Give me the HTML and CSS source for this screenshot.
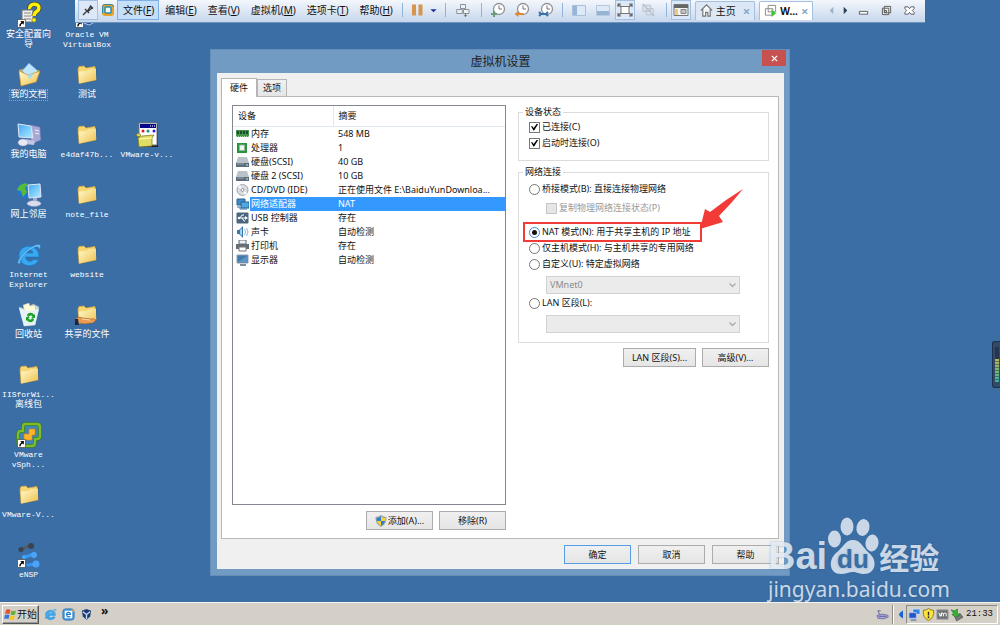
FILE: index.html
```html
<!DOCTYPE html>
<html lang="zh-CN">
  <head>
    <meta charset="UTF-8" />
    <meta name="viewport" content="width=device-width, initial-scale=1.0" />
    <title>虚拟机设置</title>
    <link rel="stylesheet" href="styles.css">
  </head>
  <body>
    <!-- Shared icons -->
    <svg class="sprite" aria-hidden="true">
      <linearGradient id="gold" x1="0" y1="0" x2="1" y2="1"><stop offset="0" stop-color="#fffbd0" /><stop offset="1" stop-color="#efc04c" /></linearGradient>
      <linearGradient id="screen" x1="0" y1="0" x2="1" y2="1"><stop offset="0" stop-color="#3da8f4" /><stop offset="1" stop-color="#b4ecff" /></linearGradient>
      <symbol id="folder" viewBox="0 0 26 26">
        <path d="M5 22 22 18.500 22.500 6 21 5 14 6 12 4 6 4.500 4 7z" fill="#2c5178" opacity=".6" />
        <path d="M4 7 5 4.500 10 4 12 6 21 4.500 22 18 5 21.500z" fill="#f5d673" stroke="#d6a63c" stroke-width=".7" />
        <path d="M4.500 9.500 13 9 14 7.500 22 6.500 22 17.500 5.500 21.500z" fill="url(#gold)" />
      </symbol>
      <symbol id="shortcut" viewBox="0 0 9 9">
        <path d="M.5.500h8v8h-8z" fill="#fff" stroke="#333" stroke-width=".6" />
        <path d="M2.300 7.500Q2 4.600 4.300 3.800L3.300 2.200 7 2 6.600 5.700 5.500 4.600Q3.600 5.300 3.700 7.300z" fill="#000" />
      </symbol>
      <symbol id="ie" viewBox="0 0 26 26">
        <path d="M23 15H9.500c.3 5 6 5.500 8 2.500l5 .5C19 26.500 3 25.500 3 13.500 3 1 23.500 1 23 15zM9.500 11h7.500c-.5-4.500-7-4.500-7.500 0z" fill="#38a8ef" stroke="#1679c9" stroke-width=".6" />
        <path d="M7 18C2 25-1 21 6 13 12 6 22 .5 24 3c1 1 0 3-1 4.500 0-3-1-3.500-5-2C11 9 3.500 17 4 20c.2 1 1.500.2 3-2z" fill="#6fc0f7" stroke="#2487d0" stroke-width=".4" />
      </symbol>
      <symbol id="disk" viewBox="0 0 13 12">
        <path d="M2 1h9l2 6H0z" fill="#b9c2c9" /><path d="M0 7h13v4H0z" fill="#5c6c7a" /><path d="M1 8h7" stroke="#93a3b0" /><path d="M10 9h2" stroke="#b9f4ff" />
      </symbol>
      <symbol id="clock" viewBox="0 0 16 16">
        <circle cx="9" cy="7" r="5.500" fill="#fff" stroke="#929292" stroke-width="1.300" /><path d="M9 3.500V7h3" fill="none" stroke="#777" />
      </symbol>
    </svg>

    <main class="desktop">
      <div class="icons">
        <a href="#" class="shortcut c1 r1"><svg viewBox="0 0 26 26"><path d="M6 8h11v12H6z" fill="#eee" stroke="#777" /><path d="M8 11h7M8 14h7M8 17h7" stroke="#888" /><path d="M13.500 7C13 1 23 .5 23 6c0 4-5 3-5 8" fill="none" stroke="#444" stroke-width="5" /><path d="M13.500 7C13 1 23 .5 23 6c0 4-5 3-5 8" fill="none" stroke="#fff200" stroke-width="3.500" /><circle cx="18" cy="18" r="2.200" fill="#fff200" stroke="#555" stroke-width=".6" /><use href="#shortcut" x="1" y="17" width="9" height="9" /></svg><span class="zh">安全配置向导</span></a>
        <a href="#" class="shortcut c1 r2 focused"><svg viewBox="0 0 26 26"><path d="M3 8 10 6 13 8 23 8 21 19 5 24z" fill="#dfaa40" /><path d="M13 1 22 9 14 17 6 9z" fill="#bce5ff" stroke="#5ba5dd" stroke-width=".7" /><path d="M3 9 12 13 24 9 20 20 5 24z" fill="url(#gold)" stroke="#c99532" stroke-width=".7" /><path d="m11 13 3 4 4-5z" fill="#a1daf9" /></svg><span class="zh">我的文档</span></a>
        <a href="#" class="shortcut c1 r3"><svg viewBox="0 0 26 26"><path d="M15 3 24 5 25 18 18 21 15 18z" fill="#a6a8d5" stroke="#6b6da9" stroke-width=".6" /><path d="m19 8 4 1m-4 2 4 1" stroke="#ecefff" /><path d="M2 2 15 4 17 16 3 15z" fill="url(#screen)" stroke="#dfe6f5" /><path d="m10 17 9 2-1 4-9-1z" fill="#c2c6e3" /><ellipse cx="7" cy="20.500" rx="5" ry="3.500" fill="#e6e8f3" stroke="#999dbf" stroke-width=".5" /></svg><span class="zh">我的电脑</span></a>
        <a href="#" class="shortcut c1 r4"><svg viewBox="0 0 26 26"><circle cx="8.500" cy="8.500" r="7.500" fill="#2475d3" /><path d="M3 4Q8 0 12 2L9 6 11 10 7 15 5 9 1 8z" fill="#55bb3a" /><path d="M12 3 24 2 25 15 13 16z" fill="url(#screen)" stroke="#e1e6f5" /><path d="M17 16h4v4h-4z" fill="#a6abd1" /><ellipse cx="18" cy="21.500" rx="7" ry="3" fill="#d9dced" stroke="#8f94bd" stroke-width=".5" /></svg><span class="zh">网上邻居</span></a>
        <a href="#" class="shortcut c1 r5"><svg viewBox="0 0 26 26"><use href="#ie" /></svg><span>Internet Explorer</span></a>
        <a href="#" class="shortcut c1 r6"><svg viewBox="0 0 26 26"><path d="M3 5 9 7 17 2 23 5 19 23 8 24z" fill="#c8dce7" stroke="#8eb4ca" stroke-width=".6" /><path d="m7 3 6-2 1 3 5-1 1 6-11 2z" fill="#fffbd4" stroke="#b7b594" stroke-width=".5" /><path d="M3 6q9 5 20 1l-4 16-11 1z" fill="#e8f2f5" /><path d="M11 14c0-4 6-4 7-1l1-1v4h-4l1.500-1c-.5-2-3-2-3.500 0zM18 17c0 4-6 4-7 1l-1 1v-4h4l-1.500 1c.5 2 3 2 3.500 0z" fill="#20a229" /></svg><span class="zh">回收站</span></a>
        <a href="#" class="shortcut c1 r7"><svg viewBox="0 0 26 26"><use href="#folder" /></svg><span>IISforWi...<br><b class="zh">离线包</b></span></a>
        <a href="#" class="shortcut c1 r8"><svg viewBox="0 0 26 26"><path d="M9 2h12q3 0 3 3v9q0 3-3 3h-2v4q0 3-3 3H5q-3 0-3-3V12q0-3 3-3h2V5q0-3 2-3z" fill="#3f86b4" stroke="#356f1c" stroke-width="3.500" /><path d="M9 2h12q3 0 3 3v9q0 3-3 3h-2v4q0 3-3 3H5q-3 0-3-3V12q0-3 3-3h2V5q0-3 2-3z" fill="none" stroke="#7cbd2a" stroke-width="2.500" /><path d="M13 7h6v6h-3v5H8v-6h5z" fill="#ffb729" stroke="#d87c06" stroke-width=".6" /><use href="#shortcut" x="1" y="17" width="9" height="9" /></svg><span>VMware vSph...</span></a>
        <a href="#" class="shortcut c1 r9"><svg viewBox="0 0 26 26"><use href="#folder" /></svg><span>VMware-V...</span></a>
        <a href="#" class="shortcut c1 r10"><svg viewBox="0 0 26 26"><g stroke-linecap="round"><path d="m6 7 9-4" stroke="#555b65" stroke-width="3" /><path d="m9 15 9-3M12 23l8-1" stroke="#3897f0" stroke-width="3" /></g><g fill="#3d434d"><circle cx="5" cy="7.500" r="2.500" /><circle cx="15" cy="4" r="3" /></g><g fill="#4ba4fa"><circle cx="8" cy="15" r="2" /><circle cx="18" cy="13" r="3" /><circle cx="20" cy="22" r="3.500" /></g><use href="#shortcut" x="1" y="17" width="9" height="9" /></svg><span>eNSP</span></a>

        <a href="#" class="shortcut c2 r1"><svg viewBox="0 0 26 26"><path d="m5 9 8-5 10 4v11l-8 4-10-4z" fill="#224a92" stroke="#b6ccec" /><use href="#shortcut" x="1" y="17" width="9" height="9" /></svg><span>Oracle VM VirtualBox</span></a>
        <a href="#" class="shortcut c2 r2"><svg viewBox="0 0 26 26"><use href="#folder" /></svg><span class="zh">测试</span></a>
        <a href="#" class="shortcut c2 r3"><svg viewBox="0 0 26 26"><use href="#folder" /></svg><span>e4daf47b...</span></a>
        <a href="#" class="shortcut c2 r4"><svg viewBox="0 0 26 26"><use href="#folder" /></svg><span>note_file</span></a>
        <a href="#" class="shortcut c2 r5"><svg viewBox="0 0 26 26"><use href="#folder" /></svg><span>website</span></a>
        <a href="#" class="shortcut c2 r6"><svg viewBox="0 0 26 26"><use href="#folder" /><path d="M1 17q4-3 8-1l8 1q3-1 5 1l-3 3-9 1-4-1-5 1z" fill="#e99c52" stroke="#854f28" stroke-width=".5" /><path d="M1 17h3l1 6H1z" fill="#17284a" /><path d="m8 17 8 1" stroke="#ffd3a0" /></svg><span class="zh">共享的文件</span></a>
        <a href="#" class="shortcut c3 r3"><svg viewBox="0 0 26 26"><path d="M6 2h18v23H6z" fill="#222" /><path d="M5 1h18v22H5z" fill="#fff" stroke="#777" /><path d="M6 2h16v4H6z" fill="#08088a" /><path d="M16 4h1m1 0h1m1 0h1" stroke="#fff" /><circle cx="9" cy="9" r="1.500" fill="#dc2020" /><circle cx="14" cy="9" r="1.500" fill="#128b8b" /><circle cx="20" cy="9" r="1.500" fill="#2222d7" /><path d="m2 13 2-2 3 2-2 2zM4 16l4-2 12-1-2 3v8L5 25z" fill="#dfdd65" stroke="#777513" stroke-width=".7" /><path d="m5 17 13-1" stroke="#ffffb3" /></svg><span>VMware-v...</span></a>
      </div>

      <!-- Full screen toolbar -->
      <header class="toolbar">
        <button class="tool pressed pin" aria-label="固定"><svg viewBox="0 0 14 14"><path d="M2 12 5.500 8.500M4 6l4 4M7 7l2.500-3.500L11 5 7.500 8zM9 2.500l3 3" fill="#aaa" stroke="#333" stroke-width="1.200" /></svg></button>
        <svg class="logo" viewBox="0 0 14 14"><path d="M4 1h6q3 0 3 3v6q0 3-3 3H4q-3 0-3-3V4q0-3 3-3z" fill="#e9a126" /><path d="M1.500 10V4q0-2.500 2.500-2.500h6q2.500 0 2.500 2.500" fill="none" stroke="#338da7" /><rect x="4" y="4" width="6" height="6" rx="1" fill="#f2f7fb" stroke="#2391b7" stroke-width="1.500" /></svg>
        <nav class="menu">
          <button class="active">文件(<u>F</u>)</button>
          <button>编辑(<u>E</u>)</button>
          <button>查看(<u>V</u>)</button>
          <button>虚拟机(<u>M</u>)</button>
          <button>选项卡(<u>T</u>)</button>
          <button>帮助(<u>H</u>)</button>
        </nav>
        <i class="sep"></i>
        <button class="tool" aria-label="暂停"><svg viewBox="0 0 14 14"><path d="M2 1.500h4v11H2zM8.500 1.500h4v11h-4z" fill="#d8954e" /></svg></button>
        <button class="tool caret" aria-label="电源菜单"><svg viewBox="0 0 8 8"><path d="M.5 2.500h7L4 6z" fill="#1d2c99" /></svg></button>
        <i class="sep"></i>
        <button class="tool wide" aria-label="发送 Ctrl+Alt+Del"><svg viewBox="0 0 14 14"><path d="M4.500 1.500h5v4h-5zM.8 6.500h5.500v4H.8zM7.500 6.500h5.500v4H7.500z" fill="#eef1f3" stroke="#8c9298" /><path d="M9.500 10v3.500M7.800 12l1.700 1.700L11.200 12" fill="none" stroke="#777" /></svg></button>
        <i class="sep"></i>
        <button class="tool snap" aria-label="快照"><svg viewBox="0 0 16 16"><use href="#clock" /><path d="M1 12h6M4 9v6" stroke="#6b9c7e" stroke-width="2" /></svg></button>
        <button class="tool snap" aria-label="恢复快照"><svg viewBox="0 0 16 16"><use href="#clock" /><path d="m.5 12 4-3v2h5v2h-5v2z" fill="#dd8830" /></svg></button>
        <button class="tool snap" aria-label="管理快照"><svg viewBox="0 0 16 16"><use href="#clock" /><path d="m1 10 2 2-2 2M3 12h5m2-2-2 2 2 2" fill="none" stroke="#356fae" stroke-width="2" /></svg></button>
        <i class="sep"></i>
        <button class="tool snap" aria-label="显示库"><svg viewBox="0 0 16 16"><path d="M1.500 3.500h13v10h-13z" fill="#dce9f7" stroke="#a8c0dc" /><path d="M2 4h4v9H2z" fill="#95b4d6" /></svg></button>
        <button class="tool snap" aria-label="缩略图"><svg viewBox="0 0 16 16"><path d="M1.500 3.500h13v10h-13z" fill="#dce9f7" stroke="#b5c8de" /><path d="M2 9h12v4H2z" fill="#95b4d6" /></svg></button>
        <button class="tool pressed full" aria-label="全屏"><svg viewBox="0 0 16 16"><path d="M4 4.500h8v7H4z" fill="#fff" stroke="#777" /><path d="M1 5V2h3M12 2h3v3M15 11v3h-3M4 14H1v-3M1 2l3 3M15 2l-3 3M1 14l3-3M15 14l-3-3" fill="none" stroke="#666" stroke-width="1.200" /></svg></button>
        <button class="tool wide" aria-label="Unity"><svg viewBox="0 0 16 16"><path d="M2 2.500h9v7H2zM6 6.500h8v7H6z" fill="#dbe3ec" stroke="#b5bec9" /><path d="m2 1 13 14" stroke="#b5bec9" stroke-width="1.300" /></svg></button>
        <i class="sep"></i>
        <button class="tool pressed full" aria-label="控制台视图"><svg viewBox="0 0 16 16"><path d="M1 2.500h14v11H1z" fill="#f4f4f4" stroke="#777" /><path d="M1 3h14v3H1z" fill="#666" /><path d="M8 7.500h5v4H8z" fill="#c1c1c1" stroke="#888" /><path d="M2 7h3v6H2z" fill="#efc878" /></svg></button>
        <a href="#" class="tab home"><svg viewBox="0 0 14 14"><path d="m1 7 6-6 6 6M3 6v7h3V9h2.500v4H11V6" fill="#fff" stroke="#777" stroke-width="1.300" /></svg>主页<em>×</em></a>
        <a href="#" class="tab current"><svg viewBox="0 0 14 14"><path d="M4.500 1.500h8v7h-8zM1.500 5h8v7h-8z" fill="#fff" stroke="#888" /><path d="m8 6 5 4-5 4z" fill="#3bc52f" /></svg><strong>W...</strong><em>×</em></a>
        <div class="window-tools">
          <button aria-label="上一个"><svg viewBox="0 0 12 12"><path d="M8 2v8L4 6z" fill="#9fb2c7" /></svg></button>
          <button aria-label="下一个"><svg viewBox="0 0 12 12"><path d="M4 2v8L8 6z" fill="#293f56" /></svg></button>
          <button class="big" aria-label="最小化"><svg viewBox="0 0 12 12"><path d="M1.500 7h9v3h-9z" fill="#fff" stroke="#555" /></svg></button>
          <button class="big" aria-label="还原"><svg viewBox="0 0 12 12"><path d="M3.500 1.500h7v7h-7zM1.500 3.500h7v7h-7zM4 6h2v2H4z" fill="#eee" stroke="#555" /></svg></button>
          <button class="big" aria-label="关闭"><svg viewBox="0 0 12 12"><path d="M1 2h3.500L6 4l1.500-2H11v2L9 6l2 2v2H7.500L6 8l-1.500 2H1V8l2-2-2-2z" fill="#fff" stroke="#555" /></svg></button>
        </div>
      </header>

      <section class="dialog">
        <div class="title-bar">
          <h1>虚拟机设置</h1>
          <button class="close" aria-label="关闭"><svg viewBox="0 0 8 8"><path d="m1 1 6 6M7 1 1 7" stroke="#fff" stroke-width="1.500" /></svg></button>
        </div>
        <div class="client">
          <div class="tabs" role="tablist">
            <button class="selected" role="tab">硬件</button>
            <button role="tab">选项</button>
          </div>
          <div class="pane">
            <div class="hardware">
              <div class="list">
                <table>
                  <colgroup>
                    <col class="col-icon">
                    <col class="col-name">
                    <col>
                  </colgroup>
                  <thead>
                    <tr><th class="device" colspan="2">设备</th><th>摘要</th></tr>
                  </thead>
                  <tbody>
                    <tr><td class="icon"><svg viewBox="0 0 13 12"><path d="M0 2h13v7H0z" fill="#41954a" /><path d="M1 3h2v3H1zM4 3h2v3H4zM7 3h2v3H7zM10 3h2v3h-2z" fill="#214a28" /><path d="M0 8.500h13" stroke="#a7d8a3" stroke-dasharray="1 1" /></svg></td><td>内存</td><td>548 MB</td></tr>
                    <tr><td class="icon"><svg viewBox="0 0 13 12"><path d="M1 1h10v10H1z" fill="#25963d" /><path d="M3.500 3h5v5.500h-5z" fill="#eef6ee" stroke="#93b89a" /></svg></td><td>处理器</td><td>1</td></tr>
                    <tr><td class="icon"><svg viewBox="0 0 13 12"><use href="#disk" /></svg></td><td>硬盘(SCSI)</td><td>40 GB</td></tr>
                    <tr><td class="icon"><svg viewBox="0 0 13 12"><use href="#disk" /></svg></td><td>硬盘 2 (SCSI)</td><td>10 GB</td></tr>
                    <tr><td class="icon"><svg viewBox="0 0 13 12"><circle cx="6.500" cy="6" r="5.500" fill="#dadde1" stroke="#a1a6ad" /><path d="M6.500 6 2 3l2-2zM6.500 6l4.500 3-2 2z" fill="#fff" /><circle cx="6.500" cy="6" r="1.500" fill="#fff" stroke="#8e959e" /></svg></td><td>CD/DVD (IDE)</td><td>正在使用文件 E:\BaiduYunDownloa...</td></tr>
                    <tr class="selected"><td class="icon"><svg viewBox="0 0 13 12"><path d="M1 1h8v6H1z" fill="#3b8cc9" stroke="#2b628e" /><path d="M5 4h8v6H5z" fill="#52a7e0" stroke="#2b628e" /><path d="M1 9h3v2h7" fill="none" stroke="#3473a3" /></svg></td><td>网络适配器</td><td>NAT</td></tr>
                    <tr><td class="icon"><svg viewBox="0 0 13 12"><rect x=".5" y=".5" width="12" height="11" rx="1" fill="#4b657f" /><path d="M2 6h8M4 6l2-3h2M6 6l2 3h1" fill="none" stroke="#fff" /><circle cx="3" cy="6" r="1.200" fill="#fff" /><path d="m9 4 3 2-3 2z" fill="#fff" /></svg></td><td>USB 控制器</td><td>存在</td></tr>
                    <tr><td class="icon"><svg viewBox="0 0 13 12"><path d="M1 4h2l4-4v12L3 8H1z" fill="#3676a9" /><path d="M4 4 6 2v8L4 8z" fill="#9bd4f5" /><path d="M8.500 3q2 3 0 6M10.500 2q3 4 0 8" fill="none" stroke="#8ab9d9" /></svg></td><td>声卡</td><td>自动检测</td></tr>
                    <tr><td class="icon"><svg viewBox="0 0 13 12"><path d="M3 0h7v4H3z" fill="#eef1f7" stroke="#667" /><path d="M0 4h13v5H0z" fill="#666d76" /><path d="M3 7h7v4H3z" fill="#fff" stroke="#777" /></svg></td><td>打印机</td><td>存在</td></tr>
                    <tr><td class="icon"><svg viewBox="0 0 13 12"><path d="M1 1h11v8H1z" fill="#427aa9" stroke="#8fa2b2" /><path d="m2 8 9-6v6z" fill="#5d96c4" /><path d="M4 11h6" stroke="#596a78" stroke-width="1.500" /></svg></td><td>显示器</td><td>自动检测</td></tr>
                  </tbody>
                </table>
              </div>
              <div class="buttons">
                <button class="btn"><svg viewBox="0 0 12 12"><path d="M6 0q3 2 5.500 2Q12 9 6 12 0 9 .5 2 3 2 6 0z" fill="#9da3aa" /><path d="M6 1.500V6H1.800L1.500 3Q4 3 6 1.500zM6 6h4.200Q9 9 6 10.700z" fill="#2d80d0" /><path d="M6 1.500Q8 3 10.500 3l-.3 3H6zM6 6v4.700Q3 9 1.800 6z" fill="#f6d438" /></svg>添加(A)...</button>
                <button class="btn">移除(R)</button>
              </div>
            </div>

            <div class="options">
              <fieldset class="status">
                <legend>设备状态</legend>
                <label class="row"><input type="checkbox" checked>已连接(C)</label>
                <label class="row"><input type="checkbox" checked>启动时连接(O)</label>
              </fieldset>
              <fieldset class="network">
                <legend>网络连接</legend>
                <label class="row"><input type="radio" name="net">桥接模式(B): 直接连接物理网络</label>
                <label class="row nested"><input type="checkbox" disabled>复制物理网络连接状态(P)</label>
                <div class="marked">
                  <label class="row"><input type="radio" name="net" checked>NAT 模式(N): 用于共享主机的 IP 地址</label>
                  <svg class="arrow" viewBox="0 0 44 42"><path d="M43 0 Q31 15 19 27l4 6L0 40 5 20l5 3Q25 11 43 0z" fill="#f23b36" /></svg>
                </div>
                <label class="row"><input type="radio" name="net">仅主机模式(H): 与主机共享的专用网络</label>
                <label class="row"><input type="radio" name="net">自定义(U): 特定虚拟网络</label>
                <select aria-label="特定虚拟网络" disabled><option>VMnet0</option></select>
                <label class="row"><input type="radio" name="net">LAN 区段(L):</label>
                <select aria-label="LAN 区段" disabled><option></option></select>
              </fieldset>
              <div class="buttons">
                <button class="btn lan">LAN 区段(S)...</button>
                <button class="btn">高级(V)...</button>
              </div>
            </div>
          </div>
          <div class="buttons footer">
            <button class="btn default">确定</button>
            <button class="btn">取消</button>
            <button class="btn">帮助</button>
          </div>
        </div>
      </section>

      <div class="meter"><i></i></div>

      <div class="watermark">
        <div class="brand">
          <span>Bai</span>
          <svg viewBox="0 0 52 58"><ellipse cx="7.500" cy="22" rx="6.500" ry="8.500" /><ellipse cx="20" cy="9.500" rx="6.500" ry="9" /><ellipse cx="36" cy="10.500" rx="6.500" ry="8.500" transform="rotate(12 36 10.500)" /><ellipse cx="45" cy="26" rx="6.500" ry="8.500" transform="rotate(8 45 26)" /><path d="M26 23c8 0 10 8 16 13 9 7 7 21-5 21-5 0-7-2-11-2s-7 2-12 2C2 57 1 43 9 36c7-5 9-13 17-13z" /><text x="26" y="51" text-anchor="middle">du</text></svg>
          <span class="exp">经验</span>
        </div>
        <div class="site">jingyan.baidu.com</div>
      </div>
    </main>

    <footer class="taskbar">
      <button class="start"><svg viewBox="0 0 13 13"><path d="M2 2q2-1.500 4.500 0L5.500 6Q3 5 1 6z" fill="#e5502d" /><path d="M7.500 2.500q2 1 4.500 0L11 6.500q-2 1-4.500 0z" fill="#67b135" /><path d="M1 7q2-1 4.500 0L4.500 11Q2 10 0 11z" fill="#3779d0" /><path d="M6.500 7.500q2 1 4.500 0l-1 4q-2 1-4.500 0z" fill="#f5c42d" /></svg>开始</button>
      <a href="#" aria-label="Internet Explorer"><svg viewBox="0 0 26 26"><use href="#ie" /></svg></a>
      <a href="#" aria-label="Outlook Express"><svg viewBox="0 0 14 14"><rect x="1" y="1" width="12" height="12" rx="3" fill="#4aa2e4" stroke="#2274b8" /><path d="M3 3h8v8H3z" fill="#fff" /><path d="M5 7h4c0-3-4-3-4 0 0 3 3 3 4 2" fill="none" stroke="#237ac4" stroke-width="1.300" /><path d="m10 2 3-1v4" fill="#ec9b46" /></svg></a>
      <a href="#" aria-label="VirtualBox"><svg viewBox="0 0 14 14"><path d="m2 3 5-2 5 2-1 6-4 4-4-4z" fill="#1d3d70" /><path d="m3 4 4 3 4-3M7 7v5" fill="none" stroke="#c8dcf2" stroke-width="1.500" /></svg></a>
      <span class="more">»</span>
      <svg class="keyboard" viewBox="0 0 14 14"><path d="M1 8q5-3 12 0v2q-5 3-11 1z" fill="#a7a7d6" stroke="#7373ad" /><path d="M3 9h8M4 7l-2-4h3" fill="none" stroke="#5e5e9e" /></svg>
      <i class="divider"></i>
      <svg class="expand" viewBox="0 0 5 10"><path d="M5 0v10Q0 7 0 5t5-5z" fill="#1862d2" /></svg>
      <div class="tray">
        <svg viewBox="0 0 14 14"><path d="M5 1h8v6H5z" fill="#3284df" stroke="#dbe4f4" /><path d="M1 5h8v6H1z" fill="#1f56c4" stroke="#b8c6e8" /><path d="M3 13h6" stroke="#687fb5" stroke-width="1.500" /></svg>
        <svg viewBox="0 0 14 14"><path d="M7 .5q2 2 5.500 2 1 8-5.500 11Q.5 10.500 1.500 2.500 5 2.500 7 .5z" fill="#ffe43b" stroke="#827926" /><path d="M7 4v4m0 1v2" stroke="#333" stroke-width="1.600" /></svg>
        <svg viewBox="0 0 14 14"><path d="M1 2h12v10H1z" fill="#6e7173" stroke="#999" /><path d="m3 5 1.500 4L6 5v4m0-3q2-1 2 0v3m0-3q2-1 3 0v3" fill="none" stroke="#fff" /></svg>
        <svg viewBox="0 0 14 14"><path d="m5 9 6-3 3 4-7 4z" fill="#777" stroke="#444" stroke-width=".6" /><path d="m1 2 4 1 3-2v5l3 1-5 3-4-3 2-1z" fill="#3cad37" stroke="#196e26" stroke-width=".6" /></svg>
        <time>21:33</time>
      </div>
    </footer>
  </body>
</html>
```

FILE: styles.css
```css
* {
  box-sizing: border-box;
}
body {
  display: flex;
  flex-direction: column;
  height: 100vh;
  margin: 0;
  overflow: hidden;
  background: #3a6ea5;
  color: #111;
  font: 9px/14px "Noto Sans", "Noto Sans CJK SC", sans-serif;
}
button,
input,
select {
  margin: 0;
  padding: 0;
  color: inherit;
  font: inherit;
}
button {
  border: 0;
  background: none;
}
a {
  color: inherit;
  text-decoration: none;
}
svg {
  display: block;
  flex: none;
}
.sprite {
  position: absolute;
  width: 0;
  height: 0;
}

/* Desktop */
.desktop {
  position: relative;
  flex: 1;
  min-height: 0;
}
.icons {
  display: grid;
  grid-template-columns: 57px 60px 60px;
  grid-auto-rows: 60px;
}
.shortcut {
  display: flex;
  flex-direction: column;
  align-items: center;
  gap: 2px;
  padding-top: 2px;
  color: #fff;
  font: 8px/10px "Liberation Mono", "Noto Sans CJK SC", monospace;
  text-align: center;
}
.shortcut svg {
  width: 26px;
  height: 26px;
}
.shortcut span {
  max-width: 53px;
}
.shortcut .zh {
  font-size: 9px;
  font-weight: normal;
}
.focused span {
  outline: 1px dotted #b59a6a;
}
.c1 { grid-column: 1; }
.c2 { grid-column: 2; }
.c3 { grid-column: 3; }
.r1 { grid-row: 1; }
.r2 { grid-row: 2; }
.r3 { grid-row: 3; }
.r4 { grid-row: 4; }
.r5 { grid-row: 5; }
.r6 { grid-row: 6; }
.r7 { grid-row: 7; }
.r8 { grid-row: 8; }
.r9 { grid-row: 9; }
.r10 { grid-row: 10; }

/* Toolbar */
.toolbar {
  position: absolute;
  top: 0;
  left: 75px;
  right: 75px;
  display: flex;
  align-items: center;
  height: 23px;
  padding: 0 4px 2px 3px;
  border-bottom: 1px solid #6f93bf;
  background: linear-gradient(#f4f7fc, #c6d6ec);
  font-size: 10px;
  white-space: nowrap;
}
.tool {
  display: flex;
  align-items: center;
  justify-content: center;
  width: 20px;
  height: 20px;
}
.tool svg {
  width: 14px;
  height: 14px;
}
.snap {
  width: 24px;
}
.snap svg,
.full svg {
  width: 16px;
  height: 16px;
}
.wide {
  width: 27px;
}
.caret {
  width: 14px;
}
.caret svg {
  width: 7px;
  height: 7px;
}
.pressed {
  border: 1px solid #a3bfe2;
  background: #dce8f7;
}
.logo {
  width: 14px;
  height: 14px;
  margin: 0 2px 0 3px;
}
.menu {
  display: flex;
}
.menu button {
  height: 20px;
  padding: 0 4px 0 5px;
  border: 1px solid transparent;
}
.menu .active {
  border-color: #7fb0e3;
  background: #c5dffa;
}
.sep {
  width: 1px;
  height: 14px;
  margin: 0 4px;
  background: #8fb4da;
}
.tab {
  display: flex;
  align-items: center;
  gap: 3px;
  height: 19px;
  margin-left: 4px;
  padding: 0 4px;
  border: 1px solid #a3bfe2;
  border-bottom: 0;
  border-radius: 2px 2px 0 0;
  background: #dbe7f5;
}
.tab svg {
  width: 13px;
  height: 13px;
}
.tab em {
  color: #86a9cd;
  font: bold 13px/14px "Noto Sans", sans-serif;
}
.home em {
  margin-left: 4px;
}
.current {
  background: #fff;
}
.window-tools {
  display: flex;
  margin-left: auto;
}
.window-tools button {
  display: grid;
  place-items: center;
  width: 14px;
  height: 16px;
}
.window-tools .big {
  width: 23px;
}
.window-tools svg {
  width: 11px;
  height: 11px;
}

/* Settings dialog */
.dialog {
  position: absolute;
  inset: 49px 21% 26px;
  display: flex;
  flex-direction: column;
  padding: 0 5px 6px 6px;
  border: 1px solid #648db8;
  background: #729bc4;
}
.title-bar {
  position: relative;
  height: 23px;
}
.title-bar h1 {
  margin: 0;
  color: #222;
  font-size: 12px;
  font-weight: normal;
  line-height: 23px;
  text-align: center;
}
.close {
  position: absolute;
  top: 0;
  right: -2px;
  display: grid;
  place-items: center;
  width: 24px;
  height: 16px;
  background: #c75050;
}
.close svg {
  width: 7px;
  height: 7px;
}
.client {
  display: flex;
  flex: 1;
  flex-direction: column;
  min-height: 0;
  padding: 5px 5px 5px 4px;
  background: #f0f0f0;
}
.tabs {
  display: flex;
  align-items: flex-end;
}
.tabs button {
  width: 30px;
  height: 17px;
  border: 1px solid #b5b5b5;
  border-bottom: 0;
  background: linear-gradient(#f0f0f0, #e5e5e5);
}
.tabs .selected {
  position: relative;
  z-index: 1;
  width: 36px;
  height: 19px;
  margin-bottom: -1px;
  padding-bottom: 1px;
  background: #fff;
}
.pane {
  display: grid;
  flex: 1;
  grid-template-columns: 274fr 251fr;
  gap: 12px;
  min-height: 0;
  padding: 8px 9px 8px 10px;
  border: 1px solid #b9b9b9;
  background: #fff;
}
.hardware {
  display: flex;
  flex-direction: column;
  gap: 6px;
  min-width: 0;
}
.list {
  flex: 1;
  min-height: 0;
  overflow: hidden;
  border: 1px solid #828790;
}
table {
  width: 100%;
  border-collapse: collapse;
  table-layout: fixed;
}
.col-icon {
  width: 17px;
}
.col-name {
  width: 83px;
}
th {
  height: 20px;
  padding: 0 5px;
  border-bottom: 1px solid #e1e8ef;
  font-weight: normal;
  text-align: left;
}
.device {
  border-right: 1px solid #e1e8ef;
}
td {
  height: 14px;
  padding: 0 5px;
  line-height: 14px;
  white-space: nowrap;
}
td:nth-child(2) {
  padding: 0 0 0 1px;
}
.list .icon {
  padding: 0 0 0 3px;
}
.icon svg {
  width: 13px;
  height: 12px;
}
.selected td:not(.icon) {
  background: #3399ff;
  color: #fff;
}
.buttons {
  display: flex;
  gap: 6px;
  justify-content: flex-end;
}
.btn {
  display: flex;
  gap: 1px;
  align-items: center;
  justify-content: center;
  width: 67px;
  height: 19px;
  border: 1px solid #acacac;
  background: linear-gradient(#f0f0f0, #e5e5e5);
}
.btn svg {
  width: 12px;
  height: 12px;
}
.lan {
  width: 73px;
}
.default {
  border-color: #569de5;
}
.footer {
  gap: 7px;
  padding-top: 6px;
}

/* Connection options */
.options {
  min-width: 0;
}
fieldset {
  min-width: 0;
  margin: 0;
  padding: 0 10px;
  border: 1px solid #dcdcdc;
}
legend {
  margin-left: -6px;
  padding: 0 2px;
}
.status {
  padding-bottom: 9px;
}
.network {
  margin-top: 4px;
  padding-top: 2px;
  padding-bottom: 8px;
}
.row {
  display: flex;
  align-items: center;
  gap: 2px;
  height: 16px;
  white-space: nowrap;
}
.nested {
  margin: 3px 0 8px 17px;
  color: #999;
}
input {
  display: grid;
  flex: none;
  place-items: center;
  width: 11px;
  height: 11px;
  appearance: none;
  border: 1px solid #777;
  background: #fff;
}
input[type="checkbox"]:checked::before {
  width: 7px;
  height: 7px;
  background: #000;
  clip-path: polygon(0 40%, 15% 35%, 38% 65%, 85% 0, 100% 10%, 45% 100%, 35% 100%);
  content: "";
}
input[type="radio"] {
  border-radius: 50%;
}
input[type="radio"]:checked {
  border-color: #3c8bd9;
}
input[type="radio"]:checked::before {
  width: 5px;
  height: 5px;
  border-radius: 50%;
  background: #111;
  content: "";
}
input:disabled {
  border-color: #c4c4c4;
  background: #e6e6e6;
}
.marked {
  position: relative;
  width: 168px;
}
/* Red highlight round the NAT option */
.marked::before {
  position: absolute;
  inset: -2px -5px -2px -6px;
  border: 2px solid #f23b36;
  content: "";
}
.arrow {
  position: absolute;
  bottom: 9px;
  left: 171px;
  width: 44px;
  height: 42px;
}
select {
  display: block;
  width: calc(100% - 35px);
  height: 18px;
  margin: 4px 0 1px 17px;
  padding: 0 3px;
  appearance: none;
  border: 1px solid #d2d2d2;
  border-radius: 0;
  background: #ebebeb url("data:image/svg+xml,%3Csvg xmlns='http://www.w3.org/2000/svg' viewBox='0 0 7 5'%3E%3Cpath d='m.5.500 3 3 3-3' fill='none' stroke='%23aaa' stroke-width='1.300'/%3E%3C/svg%3E") no-repeat right 3px center / 7px 5px;
}
select:disabled {
  color: #8b8b8b;
  opacity: 1;
}
.options .buttons {
  margin-top: 5px;
}

/* Edge meter */
.meter {
  position: absolute;
  top: 341px;
  right: 0;
  width: 8px;
  height: 47px;
  padding: 5px 1px 5px 2px;
  border: 1px solid #1d304c;
  border-right: 0;
  border-radius: 3px 0 0 3px;
  background: #34486a;
}
.meter i {
  display: block;
  height: 100%;
  background: repeating-linear-gradient(transparent 0 2px, #26364f80 2px 3px), linear-gradient(#26364f 33%, #b9b64e 33%, #37b19b);
}

/* Watermark */
.watermark {
  position: absolute;
  right: 52px;
  bottom: -2px;
  width: 180px;
  color: #e2eaf3;
  opacity: 0.85;
  text-shadow: 0 0 2px #1f3f6466;
  white-space: nowrap;
}
.brand {
  display: flex;
  align-items: flex-end;
  font: bold 38px/38px "Liberation Sans", sans-serif;
}
.brand svg {
  width: 52px;
  height: 58px;
  fill: #e2eaf3;
}
.brand text {
  fill: #3a6ea5;
  font-size: 26px;
}
.brand .exp {
  font: bold 30px/38px "Noto Sans CJK SC", sans-serif;
}
.site {
  font-size: 21px;
  line-height: 29px;
}

/* Taskbar */
.taskbar {
  position: relative;
  display: flex;
  align-items: center;
  height: 23px;
  padding: 0 2px;
  border-top: 1px solid #f4f2ec;
  background: #d4d0c8;
}
.taskbar svg {
  width: 13px;
  height: 13px;
}
.start {
  display: flex;
  align-items: center;
  width: 37px;
  height: 19px;
  margin-right: 5px;
  padding-left: 1px;
  border: 1px solid;
  border-color: #fff #555 #555 #fff;
  box-shadow: inset -1px -1px #999;
  font-size: 10px;
}
.taskbar a {
  width: 18px;
}
.more {
  margin-left: 3px;
  padding-bottom: 6px;
  font-size: 12px;
  font-weight: bold;
}
.taskbar .keyboard {
  margin-left: auto;
}
.divider {
  width: 2px;
  height: 19px;
  margin: 0 5px 0 3px;
  border-left: 1px solid #8c8a85;
  border-right: 1px solid #fff;
}
.taskbar .expand {
  width: 4px;
  height: 9px;
  margin-right: 3px;
}
.tray {
  display: flex;
  align-items: center;
  gap: 1px;
  height: 19px;
  padding: 0 4px 0 1px;
  border: 1px solid;
  border-color: #8c8a85 #fff #fff #8c8a85;
}
.tray time {
  margin-left: 2px;
  font: 9px/14px "Liberation Mono", monospace;
}
```
